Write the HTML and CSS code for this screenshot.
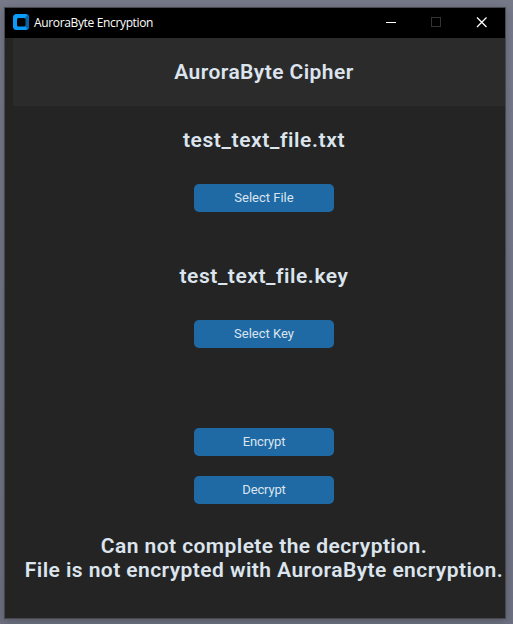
FILE: index.html
```html
<!DOCTYPE html>
<html lang="en">
<head>
<meta charset="utf-8">
<title>AuroraByte Encryption</title>
<link rel="stylesheet" href="styles.css">
</head>
<body>
<div class="window">
  <header class="titlebar">
    <svg class="app-icon" width="16" height="16" viewBox="0 0 16 16">
      <rect width="16" height="16" rx="3.5" fill="#0a9bfb"/>
      <path d="M12 4l2.500-3A3.500 3.500 0 0 1 16 3.500v9A3.500 3.500 0 0 1 14.500 15L12 12z" fill="#0862a8"/>
      <rect x="4" y="4" width="8.500" height="8.500" rx="1.500" fill="#000"/>
    </svg>
    <span class="caption">AuroraByte Encryption</span>
    <div class="controls">
      <svg width="46" height="30" viewBox="0 0 46 30"><path d="M18 14.500h10" stroke="#fff"/></svg>
      <svg width="45" height="30" viewBox="0 0 45 30"><rect x="17.500" y="9.500" width="9" height="9" fill="none" stroke="#333"/></svg>
      <svg width="46" height="30" viewBox="0 0 46 30"><path d="M18 9.500l9.500 9.500M27.500 9.500L18 19" stroke="#fff" stroke-width="1.300"/></svg>
    </div>
  </header>
  <main class="content">
    <h1 class="heading banner">AuroraByte Cipher</h1>
    <p class="heading filename">test_text_file.txt</p>
    <button class="button">Select File</button>
    <p class="heading keyname">test_text_file.key</p>
    <button class="button">Select Key</button>
    <button class="button encrypt">Encrypt</button>
    <button class="button decrypt">Decrypt</button>
    <p class="heading message">Can not complete the decryption.<br>File is not encrypted with AuroraByte encryption.</p>
  </main>
</div>
</body>
</html>
```
FILE: styles.css
```css
* { box-sizing: border-box; }
body {
  margin: 0;
  height: 624px;
  padding: 7px 0 0 4px;
  overflow: hidden;
  background: linear-gradient(#767988, #6d7080);
}
.window {
  width: 502px;
  height: 612px;
  border: 1px solid #47484d;
  background: #242424;
  overflow: hidden;
  box-shadow: 0 2px 8px rgba(0, 0, 0, 0.22);
}
.titlebar {
  display: flex;
  align-items: center;
  height: 30px;
  padding-left: 8px;
  background: #000;
}
.app-icon { margin-top: -2px; }
.caption {
  margin-left: 5px;
  color: #fff;
  font: 12px/16px "Open Sans", sans-serif;
  letter-spacing: -0.35px;
}
.controls { display: flex; margin-left: auto; }
.controls svg { display: block; }
.content {
  display: flex;
  flex-direction: column;
  align-items: center;
  width: 502px;
  margin-left: 8px;
}
.heading {
  margin: 0;
  color: #dce4ee;
  font: 600 21px/24px Roboto, sans-serif;
  letter-spacing: 0.43px;
  text-align: center;
  white-space: nowrap;
}
.banner {
  width: 100%;
  height: 68px;
  padding-top: 22px;
  background: #2b2b2b;
}
.filename { margin: 22px 0 32px; letter-spacing: 0.6px; }
.keyname { margin: 52px 0 32px; letter-spacing: 0.55px; }
.button {
  width: 140px;
  height: 28px;
  padding: 0;
  border: 0;
  border-radius: 5px;
  background: #1f6aa5;
  color: #dce4ee;
  font: 13px/28px Roboto, sans-serif;
}
.encrypt { margin-top: 80px; }
.decrypt { margin-top: 20px; }
.encrypt, .decrypt { letter-spacing: -0.15px; }
.message { margin-top: 30px; }
```
